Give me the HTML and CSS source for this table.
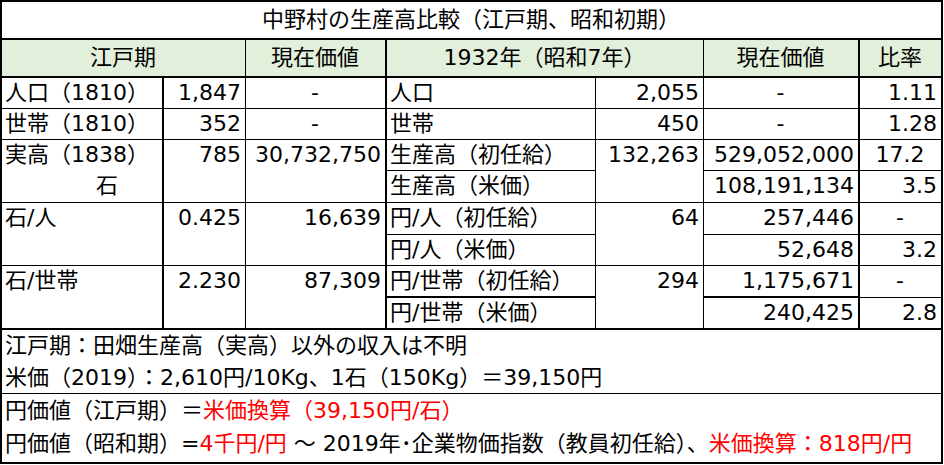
FILE: index.html
```html
<!DOCTYPE html>
<html lang="ja">
<head>
<meta charset="utf-8">
<title>中野村の生産高比較</title>
<link rel="stylesheet" href="styles.css">
</head>
<body>
<div class="sheet">
  <div class="c title all">中野村の生産高比較（江戸期、昭和初期）</div>

  <div class="c hd s2">江戸期</div>
  <div class="c hd tr">現在価値</div>
  <div class="c hd s2">1932年（昭和7年）</div>
  <div class="c hd tr">現在価値</div>
  <div class="c hd tr">比率</div>

  <div class="c tr">人口（1810）</div>
  <div class="c num">1,847</div>
  <div class="c ctr tr">-</div>
  <div class="c">人口</div>
  <div class="c num">2,055</div>
  <div class="c ctr tr">-</div>
  <div class="c num tr">1.11</div>

  <div class="c tr">世帯（1810）</div>
  <div class="c num">352</div>
  <div class="c ctr tr">-</div>
  <div class="c">世帯</div>
  <div class="c num">450</div>
  <div class="c ctr tr">-</div>
  <div class="c num tr">1.28</div>

  <div class="c tr r2">実高（1838）<span class="wrap">石</span></div>
  <div class="c num r2">785</div>
  <div class="c num tr r2">30,732,750</div>
  <div class="c">生産高（初任給）</div>
  <div class="c num r2">132,263</div>
  <div class="c num tr">529,052,000</div>
  <div class="c ctr tr">17.2</div>
  <div class="c">生産高（米価）</div>
  <div class="c num tr">108,191,134</div>
  <div class="c num tr">3.5</div>

  <div class="c tr r2">石/人</div>
  <div class="c num r2">0.425</div>
  <div class="c num tr r2">16,639</div>
  <div class="c">円/人（初任給）</div>
  <div class="c num r2">64</div>
  <div class="c num tr">257,446</div>
  <div class="c ctr tr">-</div>
  <div class="c">円/人（米価）</div>
  <div class="c num tr">52,648</div>
  <div class="c num tr">3.2</div>

  <div class="c tr tb r2">石/世帯</div>
  <div class="c num tb r2">2.230</div>
  <div class="c num tr tb r2">87,309</div>
  <div class="c tb">円/世帯（初任給）</div>
  <div class="c num tb r2">294</div>
  <div class="c num tr tb">1,175,671</div>
  <div class="c ctr tr">-</div>
  <div class="c tb">円/世帯（米価）</div>
  <div class="c num tr tb">240,425</div>
  <div class="c num tr tb">2.8</div>

  <div class="c all note n1">江戸期：田畑生産高（実高）以外の収入は不明<br>米価（2019）：2,610円/10Kg、1石（150Kg）＝39,150円</div>
  <div class="c all note n2 tb">円価値（江戸期）＝<span class="red">米価換算（39,150円/石）</span><br>円価値（昭和期）=<span class="red">4千円/円</span> ～ 2019年･企業物価指数（教員初任給）、<span class="red">米価換算：818円/円</span></div>
</div>
</body>
</html>
```

FILE: styles.css
```css
* {
  box-sizing: border-box;
  margin: 0;
  padding: 0;
}

body {
  background: #ffffff;
  font-family: "DejaVu Sans", "Noto Sans CJK JP", sans-serif;
  font-size: 22px;
  color: #000000;
}

.sheet {
  display: grid;
  width: 943px;
  grid-template-columns: 162px 82px 141px 209px 108px 156px 83px;
  grid-template-rows: 38px 38px 31px 31px 31px 32px 32px 31px 32px 32px 64px 70px;
  border-left: 2px solid #000;
  border-top: 2px solid #000;
}

.c {
  border-right: 1px solid #000;
  border-bottom: 1px solid #000;
  line-height: 30px;
  padding: 0 4px 0 3px;
  white-space: nowrap;
}

.tr { border-right-width: 2px; }
.tb { border-bottom-width: 2px; }
.r2 { grid-row: span 2; }
.s2 { grid-column: span 2; }
.all { grid-column: 1 / -1; border-right-width: 2px; }

.num { text-align: right; }
.ctr { text-align: center; }

.title {
  line-height: 36px;
  text-align: center;
  border-bottom-width: 2px;
}

.hd {
  background: #e2efda;
  text-align: center;
  line-height: 36px;
  border-bottom-width: 2px;
}

.wrap {
  display: block;
  line-height: 32px;
  padding-left: 91px;
}

.note { line-height: 32px; }
.n2 { line-height: 33px; }

.red { color: #ff0000; }
```
